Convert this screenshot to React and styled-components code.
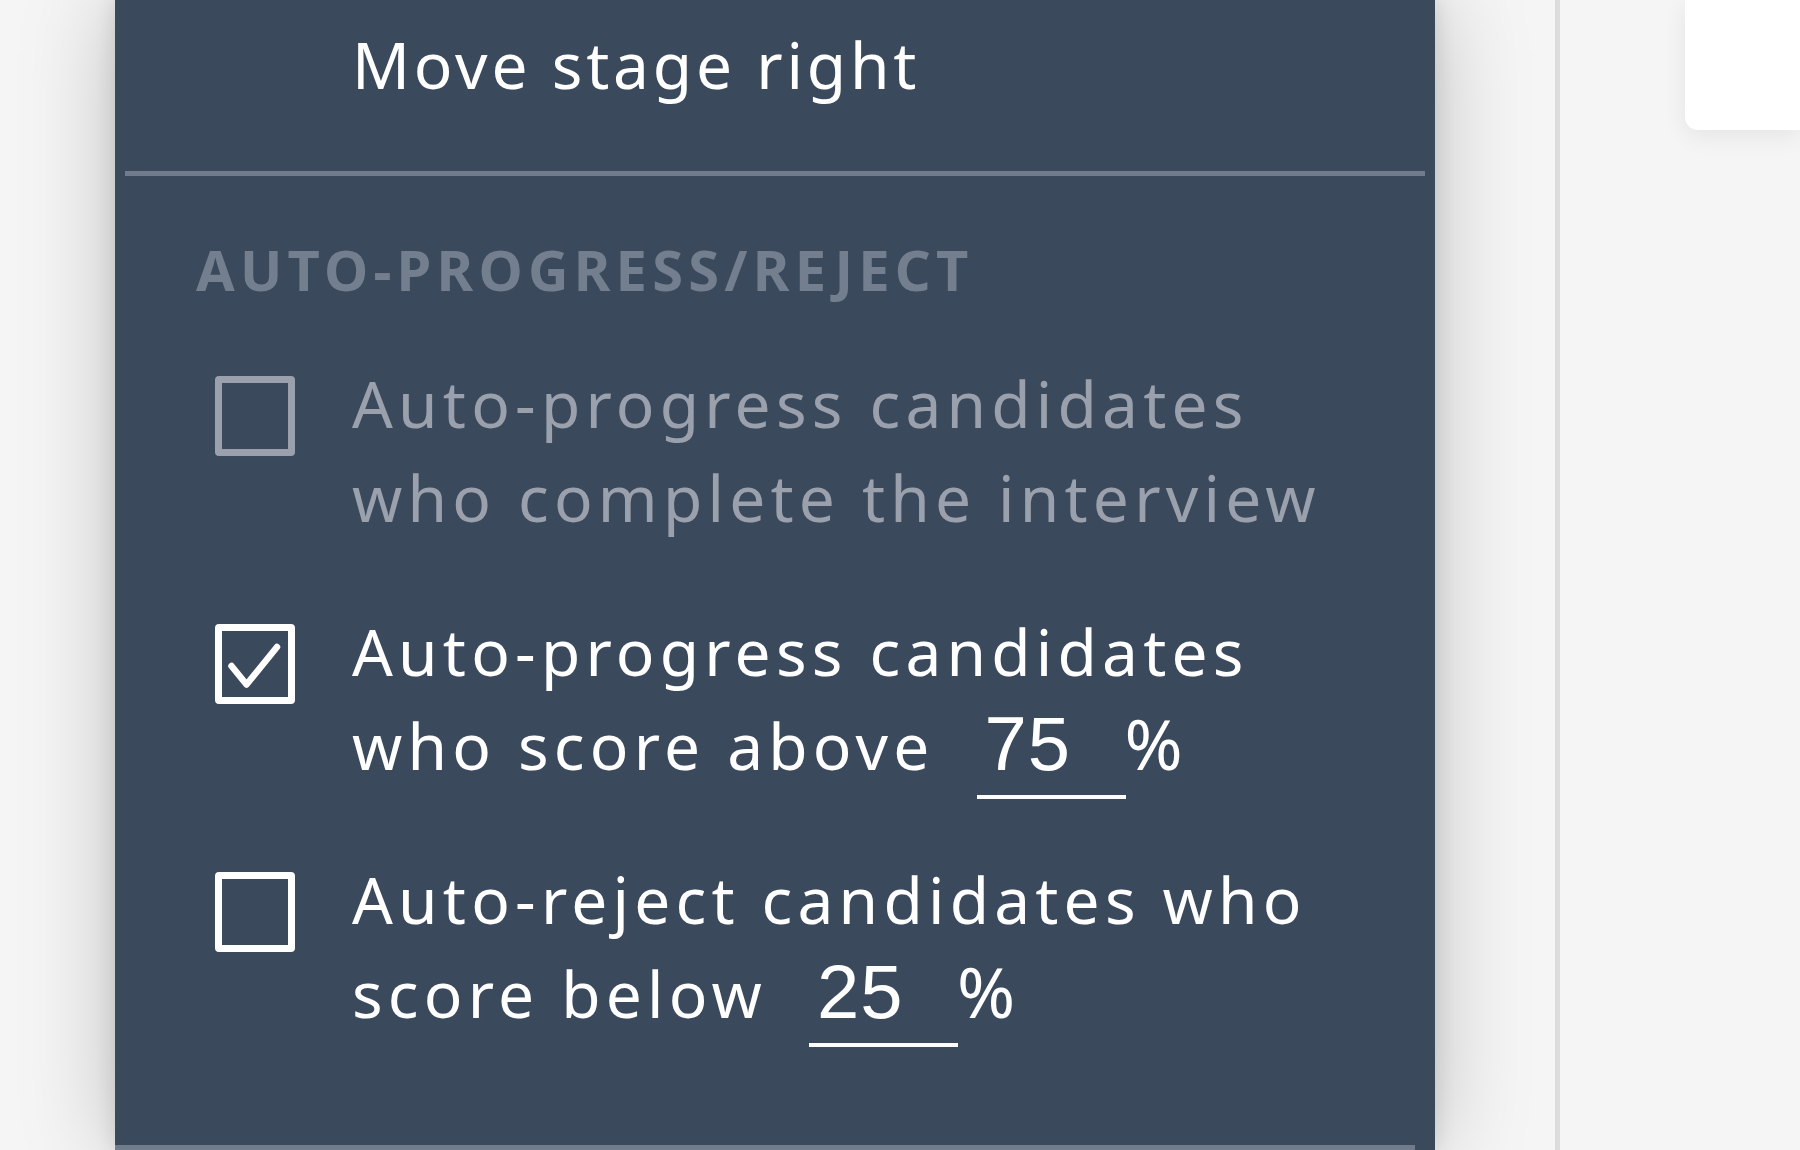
import React from 'react'
import styled, { createGlobalStyle } from 'styled-components'

const GlobalStyle = createGlobalStyle`
  html, body {
    margin: 0;
    padding: 0;
    height: 100%;
    background: #f5f5f5;
    overflow: hidden;
  }
  #root {
    height: 100%;
  }
`

const Page = styled.div`
  display: flex;
  height: 100vh;
  font-family: "Noto Sans", "Open Sans", sans-serif;
`

const Gutter = styled.div`
  width: 115px;
  flex-shrink: 0;
`

const Menu = styled.div`
  width: 1320px;
  flex-shrink: 0;
  height: 100%;
  background: #3b495c;
  box-shadow: 0 0 20px rgba(0, 0, 0, 0.12), 0 0 90px rgba(0, 0, 0, 0.22);
  position: relative;
  z-index: 1;
  display: flex;
  flex-direction: column;
`

const MenuItem = styled.div`
  padding: 18px 0 59px 237px;
  font-size: 64px;
  line-height: 94px;
  letter-spacing: 3.8px;
  color: #ffffff;
`

const Divider = styled.div`
  height: 5px;
  background: #707c8b;
  margin: ${p => p.$margin};
  flex-shrink: 0;
`

const Section = styled.div`
  padding: 55px 0 104px 0;
`

const SectionTitle = styled.div`
  padding-left: 81px;
  font-size: 56px;
  font-weight: 700;
  line-height: 76px;
  letter-spacing: 5.2px;
  color: #737f8e;
  text-transform: uppercase;
  margin-bottom: 50px;
`

const OptionList = styled.div`
  display: flex;
  flex-direction: column;
  gap: 60px;
`

const Option = styled.label`
  display: flex;
  align-items: flex-start;
  padding-left: 100px;
  color: ${p => (p.$muted ? '#9aa1ad' : '#ffffff')};
`

const Box = styled.span`
  width: 80px;
  height: 80px;
  box-sizing: border-box;
  border: 7px solid currentColor;
  border-radius: 4px;
  margin-top: 19px;
  flex-shrink: 0;
  position: relative;

  svg {
    position: absolute;
    left: -7px;
    top: -7px;
  }
`

const OptionText = styled.div`
  margin-left: 57px;
  font-size: 64px;
  line-height: 94px;
  letter-spacing: 5.2px;
  width: 1050px;
`

const Field = styled.span`
  display: inline-block;
  width: 149px;
  box-sizing: border-box;
  margin-left: 42px;
  margin-right: -1px;
  padding: 0 0 8px 8px;
  margin-bottom: -12px;
  border-bottom: 4px solid #ffffff;
  font-family: "Liberation Sans", Arial, sans-serif;
  font-size: 76px;
  line-height: 86px;
  letter-spacing: 1px;
  vertical-align: baseline;
`

const Percent = styled.span`
  font-size: 70px;
  line-height: 0;
`

const Gap = styled.div`
  width: 120px;
  flex-shrink: 0;
`

const Rule = styled.div`
  width: 5px;
  flex-shrink: 0;
  background: #dcdcdc;
`

const Side = styled.div`
  flex: 1;
  padding-left: 125px;
`

const Card = styled.div`
  height: 130px;
  background: #ffffff;
  border-radius: 0 0 0 13px;
  box-shadow: 0 6px 24px rgba(0, 0, 0, 0.07);
`

const Check = () => (
  <svg width="80" height="80" viewBox="0 0 80 80">
    <path
      d="M16.5 42 L31.5 60.5 L62 23"
      fill="none"
      stroke="#ffffff"
      strokeWidth="6.5"
      strokeLinecap="round"
      strokeLinejoin="round"
    />
  </svg>
)

const App = () => {
  return (
    <>
      <GlobalStyle />
      <Page>
        <Gutter />
        <Menu>
          <MenuItem>Move stage right</MenuItem>
          <Divider $margin="0 10px" />
          <Section>
            <SectionTitle>Auto-progress/reject</SectionTitle>
            <OptionList>
              <Option $muted>
                <Box />
                <OptionText>
                  Auto-progress candidates
                  <br />
                  who complete the interview
                </OptionText>
              </Option>
              <Option>
                <Box>
                  <Check />
                </Box>
                <OptionText>
                  Auto-progress candidates
                  <br />
                  who score above<Field>75</Field><Percent>%</Percent>
                </OptionText>
              </Option>
              <Option>
                <Box />
                <OptionText>
                  Auto-reject candidates who
                  <br />
                  score below<Field>25</Field><Percent>%</Percent>
                </OptionText>
              </Option>
            </OptionList>
          </Section>
          <Divider $margin="0 20px 0 0" />
        </Menu>
        <Gap />
        <Rule />
        <Side>
          <Card />
        </Side>
      </Page>
    </>
  )
}

export default App
